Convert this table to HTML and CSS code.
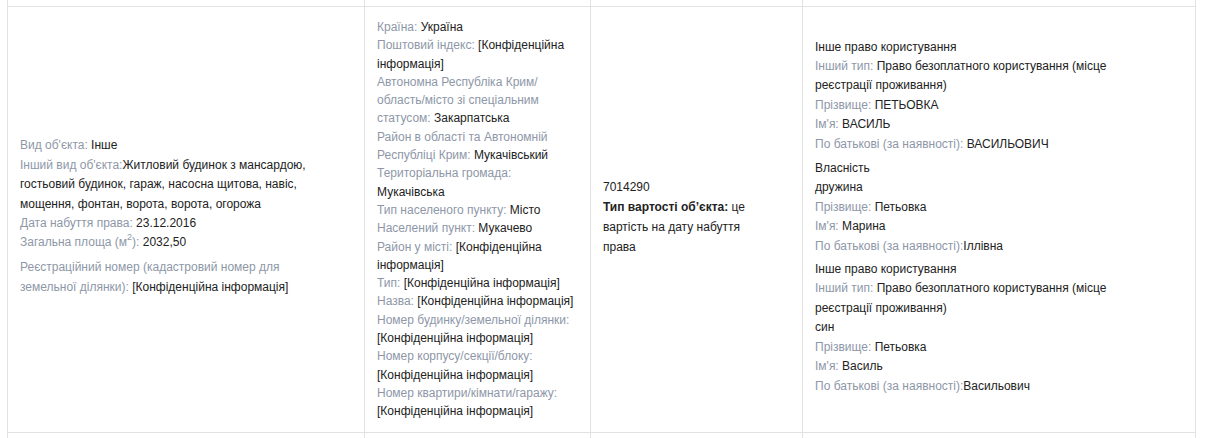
FILE: index.html
```html
<!DOCTYPE html>
<html lang="uk">
<head>
<meta charset="utf-8">
<title>Об'єкт</title>
<link rel="stylesheet" href="styles.css">
</head>
<body>
<div class="table">
  <div class="cell stub-top"></div>
  <div class="cell stub-top"></div>
  <div class="cell stub-top"></div>
  <div class="cell stub-top"></div>

  <div class="cell c1">
    <div class="inner">
      <div><span class="lbl">Вид об'єкта: </span>Інше</div>
      <div><span class="lbl">Інший вид об'єкта:</span>Житловий будинок з мансардою, гостьовий будинок, гараж, насосна щитова, навіс, мощення, фонтан, ворота, ворота, огорожа</div>
      <div><span class="lbl">Дата набуття права: </span>23.12.2016</div>
      <div><span class="lbl">Загальна площа (м<sup>2</sup>): </span>2032,50</div>
      <div class="gap"><span class="lbl">Реєстраційний номер (кадастровий номер для земельної ділянки): </span>[Конфіденційна інформація]</div>
    </div>
  </div>

  <div class="cell c2">
    <div class="inner">
      <div><span class="lbl">Країна: </span>Україна</div>
      <div><span class="lbl">Поштовий індекс: </span>[Конфіденційна інформація]</div>
      <div><span class="lbl">Автономна Республіка Крим/<wbr>область/місто зі спеціальним статусом: </span>Закарпатська</div>
      <div><span class="lbl">Район в області та Автономній Республіці Крим: </span>Мукачівський</div>
      <div><span class="lbl">Територіальна громада: </span>Мукачівська</div>
      <div><span class="lbl">Тип населеного пункту: </span>Місто</div>
      <div><span class="lbl">Населений пункт: </span>Мукачево</div>
      <div><span class="lbl">Район у місті: </span>[Конфіденційна інформація]</div>
      <div><span class="lbl">Тип: </span>[Конфіденційна інформація]</div>
      <div><span class="lbl">Назва: </span>[Конфіденційна інформація]</div>
      <div><span class="lbl">Номер будинку/земельної ділянки: </span>[Конфіденційна інформація]</div>
      <div><span class="lbl">Номер корпусу/секції/блоку: </span>[Конфіденційна інформація]</div>
      <div><span class="lbl">Номер квартири/кімнати/гаражу: </span>[Конфіденційна інформація]</div>
    </div>
  </div>

  <div class="cell c3">
    <div class="inner">
      <div>7014290</div>
      <div><b>Тип вартості об’єкта:</b> це вартість на дату набуття права</div>
    </div>
  </div>

  <div class="cell c4">
    <div class="inner">
      <div class="block">
        <div>Інше право користування</div>
        <div><span class="lbl">Інший тип: </span>Право безоплатного користування (місце реєстрації проживання)</div>
        <div><span class="lbl">Прізвище: </span>ПЕТЬОВКА</div>
        <div><span class="lbl">Ім'я: </span>ВАСИЛЬ</div>
        <div><span class="lbl">По батькові (за наявності): </span>ВАСИЛЬОВИЧ</div>
      </div>
      <div class="block b2">
        <div>Власність</div>
        <div>дружина</div>
        <div><span class="lbl">Прізвище: </span>Петьовка</div>
        <div><span class="lbl">Ім'я: </span>Марина</div>
        <div><span class="lbl">По батькові (за наявності):</span>Іллівна</div>
      </div>
      <div class="block b3">
        <div>Інше право користування</div>
        <div><span class="lbl">Інший тип: </span>Право безоплатного користування (місце реєстрації проживання)</div>
        <div>син</div>
        <div><span class="lbl">Прізвище: </span>Петьовка</div>
        <div><span class="lbl">Ім'я: </span>Василь</div>
        <div><span class="lbl">По батькові (за наявності):</span>Васильович</div>
      </div>
    </div>
  </div>

  <div class="cell stub-bottom"></div>
  <div class="cell stub-bottom"></div>
  <div class="cell stub-bottom"></div>
  <div class="cell stub-bottom"></div>
</div>
</body>
</html>
```

FILE: styles.css
```css
html, body {
  margin: 0;
  padding: 0;
  background: #ffffff;
}

body {
  font-family: Arial, "Liberation Sans", sans-serif;
  font-size: 12px;
  color: #222222;
}

.table {
  display: grid;
  grid-template-columns: 357px 226px 212px 393px;
  margin-left: 7px;
  width: 1189px;
  border-left: 1px solid #e2e2e2;
  box-sizing: border-box;
}

.cell {
  border-right: 1px solid #e2e2e2;
  border-bottom: 1px solid #e2e2e2;
  box-sizing: border-box;
  display: flex;
  flex-direction: column;
  justify-content: center;
  padding: 11px 12px;
}

.stub-top {
  height: 7px;
  padding: 0;
}

.stub-bottom {
  height: 12px;
  padding: 0;
  border-bottom: none;
}

.lbl {
  color: #8e97a8;
}

sup {
  font-size: 9px;
  line-height: 0;
  vertical-align: 6px;
}

.c1 {
  line-height: 19.4px;
  padding-bottom: 16px;
}

.c1 .inner {
  max-width: 318px;
}

.c1 .gap {
  margin-top: 5.6px;
}

.c2 {
  line-height: 18.3px;
}

.c3 {
  line-height: 20px;
  padding-bottom: 16px;
}

.c3 .inner {
  max-width: 160px;
}

.c3 b {
  font-weight: bold;
}

.c4 {
  line-height: 19.4px;
  padding-bottom: 16px;
}

.c4 .inner {
  max-width: 318px;
}

.c4 .b2 {
  margin-top: 5px;
}

.c4 .b3 {
  margin-top: 4px;
}
```
